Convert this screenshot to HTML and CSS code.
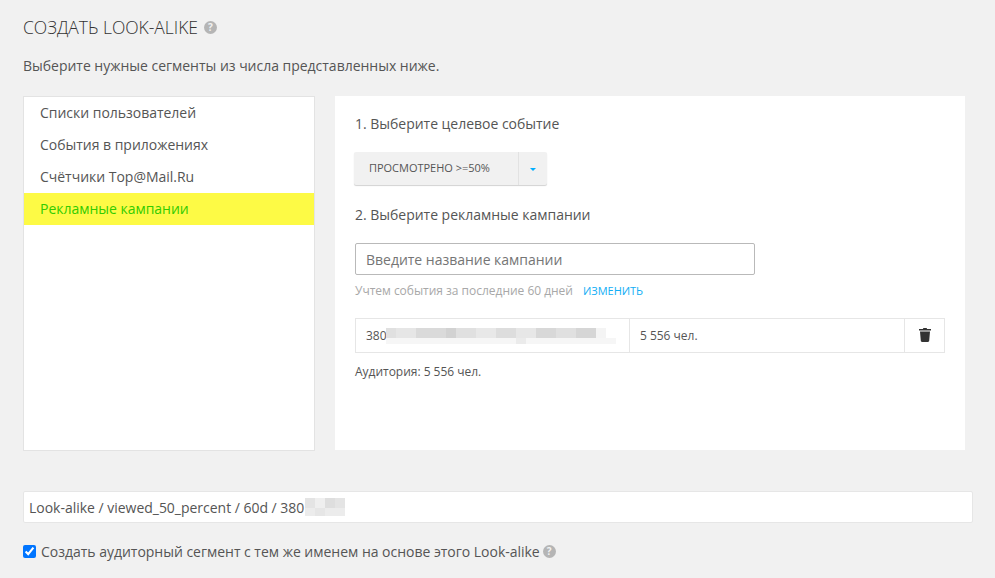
FILE: index.html
```html
<!DOCTYPE html>
<html lang="ru">
<head>
<meta charset="utf-8">
<title>Создать Look-alike</title>
<link rel="stylesheet" href="styles.css">
</head>
<body>
<main class="page">
  <h1 class="title">СОЗДАТЬ LOOK-ALIKE <span class="help help-lg">?</span></h1>
  <p class="intro">Выберите нужные сегменты из числа представленных ниже.</p>
  <div class="columns">
    <ul class="menu">
      <li class="menu-item">Списки пользователей</li>
      <li class="menu-item">События в приложениях</li>
      <li class="menu-item">Счётчики Top@Mail.Ru</li>
      <li class="menu-item active">Рекламные кампании</li>
    </ul>
    <section class="panel">
      <h2 class="step step-first">1. Выберите целевое событие</h2>
      <div class="split">
        <span class="split-label">ПРОСМОТРЕНО &gt;=50%</span>
        <span class="split-caret"><i class="caret"></i></span>
      </div>
      <h2 class="step step-second">2. Выберите рекламные кампании</h2>
      <input class="search" type="text" placeholder="Введите название кампании">
      <p class="hint"><span>Учтем события за последние 60 дней</span><a class="link">ИЗМЕНИТЬ</a></p>
      <div class="row">
        <div class="cell cell-name">380
          <svg class="blur blur-row" width="230" height="18" viewBox="0 0 230 18">
            <rect width="210" height="10" y="0" fill="#e0e0e0"/>
            <rect x="10" width="20" height="10" fill="#e6e6e6"/>
            <rect x="30" width="30" height="10" fill="#dadada"/>
            <rect x="60" width="10" height="10" fill="#d2d2d2"/>
            <rect x="90" width="20" height="10" fill="#e8e8e8"/>
            <rect x="110" width="20" height="10" fill="#dddddd"/>
            <rect x="130" width="20" height="10" fill="#e7e7e7"/>
            <rect x="150" width="20" height="10" fill="#d8d8d8"/>
            <rect x="190" width="20" height="10" fill="#d6d6d6"/>
            <rect x="210" width="10" height="10" fill="#f4f4f4"/>
            <rect y="10" width="230" height="6" fill="#f6f6f6"/>
            <rect x="130" y="10" width="10" height="6" fill="#ebebeb"/>
          </svg>
        </div>
        <div class="cell cell-count">5 556 чел.</div>
        <div class="cell cell-action">
          <svg class="trash" width="12" height="14" viewBox="0 0 12 14">
            <path fill="#333" d="M4.400 0h3.200l.5 1H12v1.600H0V1h3.900zM1 3.500h10l-.8 9.300c0 .7-.6 1.200-1.200 1.200H3c-.6 0-1.200-.5-1.200-1.200z"/>
          </svg>
        </div>
      </div>
      <p class="audience">Аудитория: 5 556 чел.</p>
    </section>
  </div>
  <div class="name-field">
    <span>Look-alike / viewed_50_percent / 60d / 380</span>
    <svg class="blur" width="40" height="18" viewBox="0 0 40 18">
      <rect width="40" height="10" y="0" fill="#e4e4e4"/>
      <rect x="10" width="10" height="10" fill="#efefef"/>
      <rect x="20" width="10" height="10" fill="#dedede"/>
      <rect y="10" width="40" height="8" fill="#ececec"/>
      <rect x="10" y="10" width="10" height="8" fill="#e6e6e6"/>
    </svg>
  </div>
  <label class="check">
    <input class="check-box" type="checkbox" checked>
    <span>Создать аудиторный сегмент с тем же именем на основе этого Look-alike</span>
    <span class="help">?</span>
  </label>
</main>
</body>
</html>
```

FILE: styles.css
```css
* { box-sizing: border-box; }

html, body {
  margin: 0;
  height: 100%;
}

body {
  background: #f1f1f1;
  color: #555;
  font-family: "Open Sans", "Liberation Sans", sans-serif;
  font-size: 14px;
  letter-spacing: -0.02px;
  overflow: hidden;
}

.page {
  padding: 16px 22px 0 23px;
}

.title {
  margin: 0;
  font-size: 17.5px;
  line-height: 22px;
  font-weight: 300;
  color: #333;
  display: flex;
  align-items: center;
  gap: 6px;
}

.help {
  display: inline-flex;
  align-items: center;
  justify-content: center;
  width: 13px;
  height: 13px;
  border-radius: 50%;
  background: #b5b5b5;
  color: #f1f1f1;
  font-size: 10px;
  font-weight: 700;
  line-height: 1;
}

.intro {
  margin: 18px 0 0;
  line-height: 20px;
  font-size: 14px;
}

.columns {
  display: flex;
  margin-top: 20px;
  gap: 20px;
  width: 942px;
  height: 355px;
}

.menu {
  list-style: none;
  margin: 0;
  padding: 0;
  width: 292px;
  background: #fff;
  border: 1px solid #e3e3e3;
}

.menu-item {
  height: 32px;
  line-height: 32px;
  padding-left: 16px;
}

.menu-item.active {
  background: #fdfa45;
  color: #33cc00;
}

.panel {
  width: 630px;
  height: 354px;
  background: #fff;
  padding: 17px 20px 0;
}

.step {
  margin: 0;
  font-size: 14px;
  font-weight: 400;
  line-height: 22px;
}

.split {
  display: flex;
  width: 193px;
  height: 33px;
  margin: 17px 0 0 -1px;
  background: #f1f1f1;
  border-radius: 2px;
  box-shadow: 0 1px 1px rgba(0, 0, 0, .18);
  font-size: 11px;
  line-height: 31px;
}

.split-label {
  width: 165px;
  padding-left: 15px;
  border-right: 1px solid #e2e2e2;
}

.split-caret {
  flex: 1;
  display: flex;
  align-items: center;
  justify-content: center;
}

.caret {
  width: 0;
  height: 0;
  margin-top: 1px;
  border-left: 3.5px solid transparent;
  border-right: 3.5px solid transparent;
  border-top: 3.5px solid #00aeff;
}

.step-second {
  margin-top: 19px;
}

.search {
  display: block;
  width: 400px;
  height: 32px;
  margin-top: 17px;
  padding: 0 10px;
  border: 1px solid #b9b9b9;
  border-radius: 2px;
  background: #fff;
  font: 14px "Open Sans", "Liberation Sans", sans-serif;
  letter-spacing: -0.02px;
  color: #555;
  outline: none;
}

.search::placeholder {
  color: #757575;
  opacity: 1;
}

.hint {
  display: flex;
  align-items: baseline;
  gap: 10px;
  margin: 8px 0 0;
  font-size: 12px;
  line-height: 16px;
  color: #a8a8a8;
}

.link {
  font-size: 11px;
  color: #12aef5;
}

.row {
  display: flex;
  width: 590px;
  height: 35px;
  margin-top: 19px;
  border: 1px solid #e6e6e6;
  font-size: 12px;
}

.cell {
  display: flex;
  align-items: center;
  line-height: 33px;
}

.cell-name {
  position: relative;
  width: 274px;
  padding-left: 10px;
  border-right: 1px solid #e6e6e6;
}

.blur {
  flex: none;
  display: inline-block;
}

.blur-row {
  position: absolute;
  left: 30px;
  top: 9px;
}

.cell-count {
  width: 275px;
  padding-left: 10px;
  border-right: 1px solid #e6e6e6;
}

.cell-action {
  flex: 1;
  justify-content: center;
}

.trash {
  display: block;
  margin-top: -2px;
}

.audience {
  margin: 11px 0 0;
  font-size: 12px;
  line-height: 16px;
}

.name-field {
  display: flex;
  align-items: center;
  width: 950px;
  height: 32px;
  margin-top: 40px;
  padding: 0 5px;
  background: #fff;
  border: 1px solid #e6e6e6;
  border-radius: 2px;
  font-size: 14px;
}

.name-field .blur {
  margin-left: 1px;
}

.check {
  display: flex;
  align-items: center;
  gap: 5px;
  margin-top: 18px;
  height: 20px;
}

.check .help {
  margin-left: -2px;
}

.check-box {
  width: 13px;
  height: 13px;
  margin: 0;
}
```
